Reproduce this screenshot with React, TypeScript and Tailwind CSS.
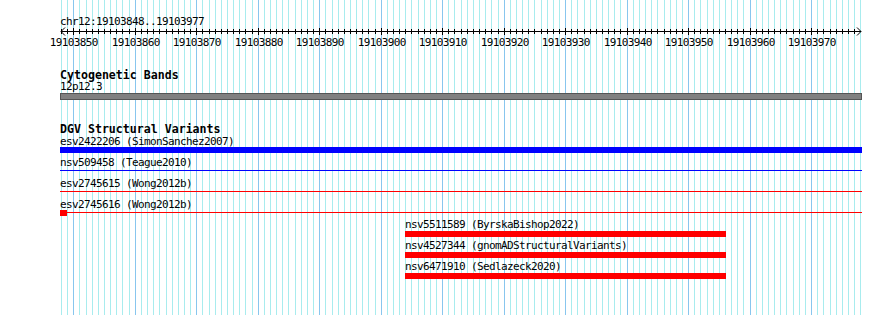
import React from "react";

const START = 19103848;
const BP_COUNT = 131; // one grid line per base
const PX_PER_BP = 6.148;
const X0 = 61;

const gridX = (i: number) => Math.round(X0 + i * PX_PER_BP) + 0.5;

const mono = { fontFamily: '"DejaVu Sans Mono", "Liberation Mono", monospace' };

// background grid, drawn behind the tracks
const Grid: React.FC = () => (
  <svg className="absolute inset-0" width={890} height={315} shapeRendering="crispEdges">
    {Array.from({ length: BP_COUNT }).map((_, i) => (
      <line
        key={i}
        x1={gridX(i)}
        x2={gridX(i)}
        y1={0}
        y2={315}
        stroke={(START + i) % 10 === 0 ? "#88c6ee" : "#a8ecee"}
        strokeWidth={1}
      />
    ))}
  </svg>
);

// ruler with ticks every base, labels every 10
const Ruler: React.FC = () => {
  const y = 5.5;
  const left = X0;
  const right = 861;
  return (
    <svg width={890} height={22} className="block -ml-[60px]" shapeRendering="crispEdges">
      <line x1={left} x2={right} y1={y} y2={y} stroke="#000" />
      {Array.from({ length: BP_COUNT - 1 }).map((_, i) => {
        const x = gridX(i);
        const major = (START + i) % 10 === 0;
        return <line key={i} x1={x} x2={x} y1={major ? 2 : 3} y2={major ? 9 : 8} stroke="#000" />;
      })}
      <polyline points={`${left + 4},1.5 ${left},${y} ${left + 4},9.5`} fill="none" stroke="#000" shapeRendering="auto" />
      <polyline points={`${right - 4},1.5 ${right},${y} ${right - 4},9.5`} fill="none" stroke="#000" shapeRendering="auto" />
      {Array.from({ length: BP_COUNT }).map((_, i) =>
        (START + i) % 10 === 0 ? (
          <text
            key={i}
            x={gridX(i) + 0.3}
            y={19.5}
            textAnchor="middle"
            fontSize={11}
            letterSpacing={-0.62}
            fill="#000"
            style={mono}
          >
            {START + i}
          </text>
        ) : null
      )}
    </svg>
  );
};

const Label: React.FC<{ text: string; className?: string }> = ({ text, className = "" }) => (
  <div
    className={`text-[11px] tracking-[-0.62px] leading-[11px] text-black whitespace-nowrap ${className}`}
    style={mono}
  >
    {text}
  </div>
);

const Title: React.FC<{ text: string; className?: string }> = ({ text, className = "" }) => (
  <div className={`text-[11.6px] font-bold leading-[12px] text-black whitespace-nowrap ${className}`} style={mono}>
    {text}
  </div>
);

const lowerRows = [
  "nsv5511589 (ByrskaBishop2022)",
  "nsv4527344 (gnomADStructuralVariants)",
  "nsv6471910 (Sedlazeck2020)",
];

export default function App() {
  return (
    <div className="relative w-[890px] h-[315px] bg-white overflow-hidden">
      <Grid />
      <div className="relative flex flex-col pl-[60px]">
        <Label text="chr12:19103848..19103977" className="mt-[16px] h-[10px]" />
        <Ruler />

        <Title text="Cytogenetic Bands" className="mt-[21px] h-[12px]" />
        <Label text="12p12.3" className="h-[12px]" />
        <div className="w-[802px] h-[7px] bg-[#808080] border border-[#555555]" />

        <Title text="DGV Structural Variants" className="mt-[23px] h-[13px]" />
        <Label text="esv2422206 (SimonSanchez2007)" className="h-[11px]" />
        <div className="w-[802px] h-[6px] bg-[#0000ff]" />

        <Label text="nsv509458 (Teague2010)" className="mt-[4px] h-[13px]" />
        <div className="w-[802px] h-px bg-[#0000ff]" />

        <Label text="esv2745615 (Wong2012b)" className="mt-[7px] h-[13px]" />
        <div className="w-[802px] h-px bg-[#ff0000]" />

        <Label text="esv2745616 (Wong2012b)" className="mt-[7px] h-[11px]" />
        <div className="flex w-[802px] h-[6px]">
          <div className="w-[7px] h-[6px] bg-[#ff0000]" />
          <div className="flex-1 h-px mt-[2px] bg-[#ff0000]" />
        </div>

        <div className="flex flex-col ml-[345px]">
          {lowerRows.map((t) => (
            <div key={t} className="flex flex-col mt-[3px]">
              <Label text={t} className="h-[12px]" />
              <div className="w-[321px] h-[6px] bg-[#ff0000]" />
            </div>
          ))}
        </div>
      </div>
    </div>
  );
}
